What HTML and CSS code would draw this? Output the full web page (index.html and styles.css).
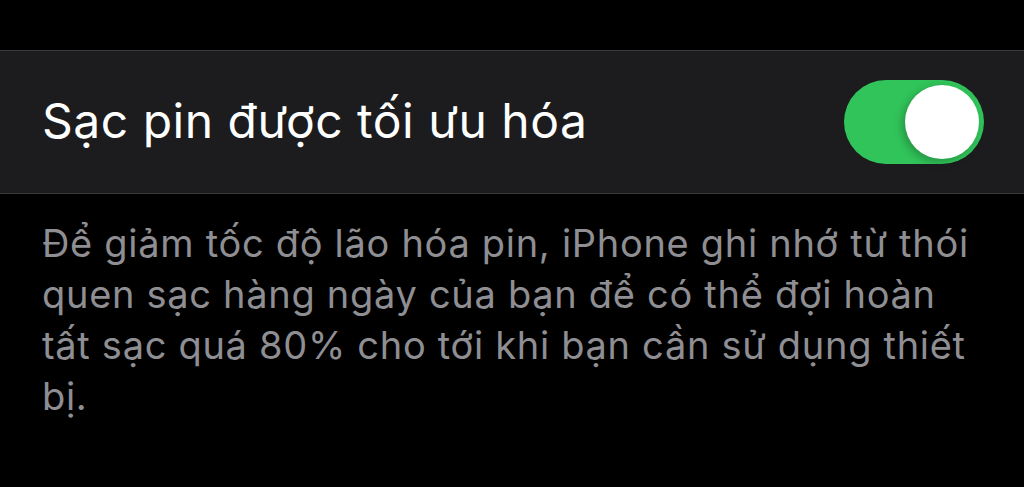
FILE: index.html
```html
<!DOCTYPE html>
<html lang="vi">
<head>
<meta charset="utf-8">
<link rel="stylesheet" href="styles.css">
</head>
<body>
<div class="page">
  <div class="group">
    <div class="row">
      <span class="label">Sạc pin được tối ưu hóa</span>
      <span class="switch"><span class="knob"></span></span>
    </div>
  </div>
  <p class="footer">Để giảm tốc độ lão hóa pin, iPhone ghi nhớ từ thói quen sạc hàng ngày của bạn để có thể đợi hoàn tất sạc quá 80% cho tới khi bạn cần sử dụng thiết bị.</p>
</div>
</body>
</html>
```
FILE: styles.css
```css
html, body {
  margin: 0;
  padding: 0;
  background: #000;
  height: 100%;
  overflow: hidden;
}
.page {
  padding-top: 50px;
  font-family: Inter, "Noto Sans", sans-serif;
}
.group {
  background: #1c1c1e;
  border-top: 1px solid #38383a;
  border-bottom: 1px solid #38383a;
}
.row {
  height: 142px;
  display: flex;
  align-items: center;
  justify-content: space-between;
  padding: 0 40px 0 42px;
}
.label {
  color: #fff;
  font-size: 48px;
  letter-spacing: 0.5px;
  padding-bottom: 4px;
}
.switch {
  width: 140px;
  height: 84px;
  border-radius: 42px;
  background: #31c45a;
  display: flex;
  align-items: center;
  justify-content: flex-end;
  padding: 0 5px;
  box-sizing: border-box;
}
.knob {
  width: 74px;
  height: 74px;
  border-radius: 50%;
  background: #fff;
  box-shadow: -3px 3px 8px rgba(0,0,0,0.25);
}
.footer {
  margin: 0;
  padding: 24px 40px 0 42px;
  color: #8e8e93;
  font-size: 38px;
  line-height: 51px;
  letter-spacing: 0.7px;
}
```
